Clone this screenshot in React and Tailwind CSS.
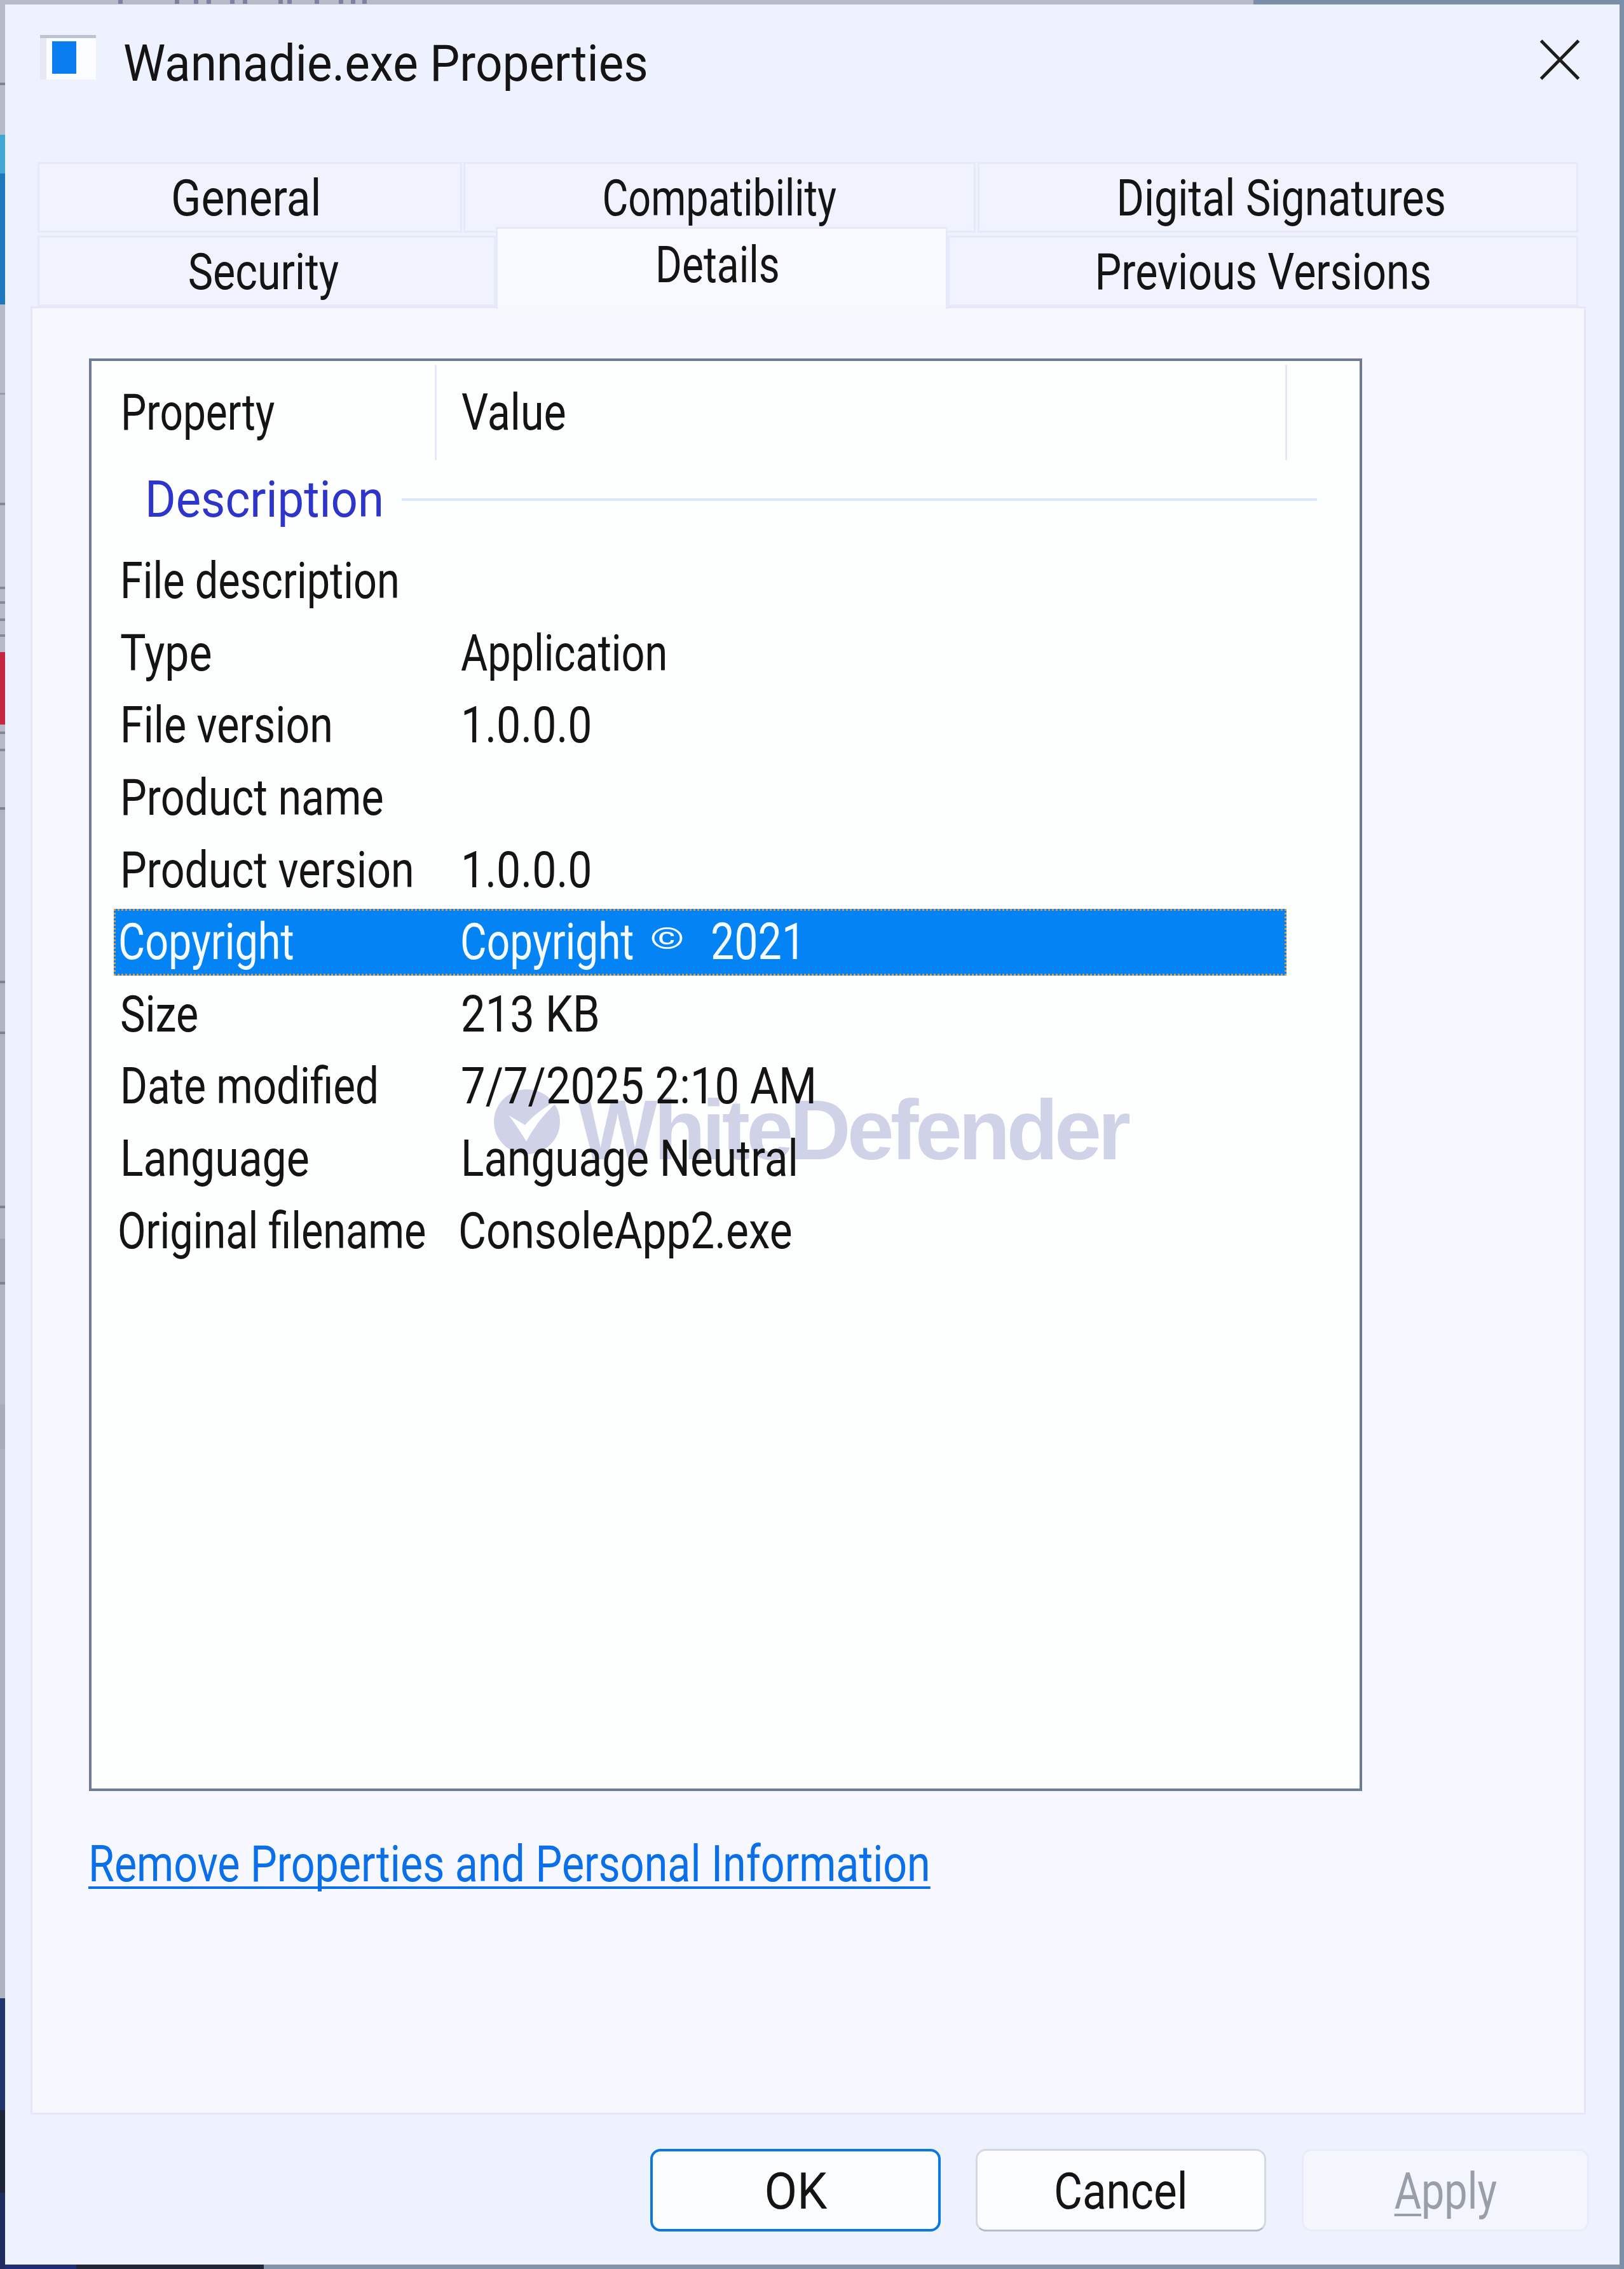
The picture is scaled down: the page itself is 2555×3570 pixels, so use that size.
const rows = [
  { name: "File description", value: "", nameClass: "scale-x-[.82]" },
  { name: "Type", value: "Application", nameClass: "scale-x-[.86]", valueClass: "scale-x-[.82]" },
  { name: "File version", value: "1.0.0.0", valueClass: "scale-x-[.86]" },
  { name: "Product name", value: "" },
  { name: "Product version", value: "1.0.0.0", valueClass: "scale-x-[.86]" },
  { name: "Copyright", value: "Copyright", selected: true },
  { name: "Size", value: "213 KB", valueClass: "scale-x-[.87]" },
  { name: "Date modified", value: "7/7/2025 2:10 AM", nameClass: "scale-x-[.83]", valueClass: "scale-x-[.87]" },
  { name: "Language", value: "Language Neutral", nameClass: "scale-x-[.86]", valueClass: "scale-x-[.855]" },
  { name: "Original filename", value: "ConsoleApp2.exe", nameClass: "-ml-[4px] scale-x-[.82]", valueClass: "-ml-[4px] scale-x-[.855]" },
];

function Label({ children, className = "scale-x-[.84]" }) {
  return <span className={`inline-block origin-left whitespace-nowrap ${className}`}>{children}</span>;
}

function CenterLabel({ children, className = "scale-x-[.84]" }) {
  return <span className={`inline-block whitespace-nowrap ${className}`}>{children}</span>;
}

function LeftStrip() {
  return (
    <div className="flex h-full w-[8px] shrink-0 flex-col bg-[#b7bbc9]">
      <div className="h-[130px]" />
      <div className="h-[4px] bg-[#7f838f]" />
      <div className="h-[78px]" />
      <div className="h-[61px] bg-[#41a5d6]" />
      <div className="h-[206px] bg-[#1f78bb]" />
      <div className="h-[139px]" />
      <div className="h-[3px] bg-[#989ca8]" />
      <div className="h-[170px]" />
      <div className="h-[4px] bg-[#858995]" />
      <div className="h-[128px]" />
      <div className="h-[4px] bg-[#858995]" />
      <div className="h-[19px]" />
      <div className="h-[4px] bg-[#858995]" />
      <div className="h-[23px]" />
      <div className="h-[4px] bg-[#858995]" />
      <div className="h-[21px]" />
      <div className="h-[4px] bg-[#858995]" />
      <div className="h-[24px]" />
      <div className="h-[114px] bg-[#c4273f]" />
      <div className="h-[11px]" />
      <div className="h-[4px] bg-[#858995]" />
      <div className="h-[23px]" />
      <div className="h-[4px] bg-[#858995]" />
      <div className="h-[88px]" />
      <div className="h-[4px] bg-[#7f838f]" />
      <div className="h-[269px] bg-[#b0b4c1]" />
      <div className="h-[4px] bg-[#7f838f]" />
      <div className="h-[76px] bg-[#b0b4c1]" />
      <div className="h-[4px] bg-[#7f838f]" />
      <div className="h-[270px] bg-[#b0b4c1]" />
      <div className="h-[4px] bg-[#7f838f]" />
      <div className="h-[48px] bg-[#b0b4c1]" />
      <div className="h-[68px] bg-[#a1a5b2]" />
      <div className="h-[4px] bg-[#7f838f]" />
      <div className="h-[190px] bg-[#b0b4c1]" />
      <div className="h-[70px] bg-[#a8acb9]" />
      <div className="h-[864px] bg-[#afb3c0]" />
      <div className="h-[176px] bg-[#21346f]" />
      <div className="h-[130px] bg-[#1d2338]" />
      <div className="h-[120px] bg-[#1e2d5e]" />
    </div>
  );
}

function TopStrip() {
  return (
    <div className="flex h-[7px] shrink-0">
      <svg className="h-[7px] w-[1964px] shrink-0" viewBox="0 0 1964 7">
        <rect width="1964" height="7" fill="#b7bbc9" />
        {[178, 267, 297, 317, 354, 374, 430, 444, 487, 525, 544, 562].map((x) => (
          <rect key={x} x={x} y="0" width="7" height="6" fill="#7f7f9e" />
        ))}
      </svg>
      <div className="flex-1 bg-[#7c8fa8]" />
    </div>
  );
}

function BottomStrip() {
  return (
    <div className="flex h-[7px] shrink-0">
      <div className="w-[112px] bg-[#1e2d75]" />
      <div className="w-[295px] bg-[#20273a]" />
      <div className="flex-1 bg-[#8594a8]" />
    </div>
  );
}

function Tab({ label, w, active, className = "", textClass }) {
  if (active) {
    return (
      <div className={`relative z-10 -mb-[4px] flex h-[129px] shrink-0 justify-center border-x-[3px] border-t-[3px] border-[#e6e9f8] bg-[#f8f9ff] pt-[18px] ${w} ${className}`}>
        <span className="pr-[14px]"><CenterLabel className={textClass}>{label}</CenterLabel></span>
      </div>
    );
  }
  return (
    <div className={`flex h-[111px] shrink-0 items-center justify-center border-[3px] border-[#e6e9f8] bg-[#f0f3fe] pt-[4px] ${w} ${className}`}>
      <CenterLabel className={textClass}>{label}</CenterLabel>
    </div>
  );
}

function Row({ name, value, selected, nameClass, valueClass }) {
  if (selected) {
    return (
      <div className="flex h-[113.6px] items-center">
        <div className="flex h-[105px] w-full items-center bg-[#0483f5] text-[#f6fbff] outline-[3px] outline-dotted -outline-offset-[3px] outline-[#d99a4e]">
          <div className="w-[545px] pl-[7px]"><span className="inline-block origin-left scale-x-[.82]">{name}</span></div>
          <div className="flex items-center">
            <span className="w-[272px] origin-left scale-x-[.81]">{value}</span>
            <span className="ml-[22px] flex w-[63px] -translate-y-[6px] scale-x-[1.5] items-center justify-center text-[46px] leading-none">©</span>
            <span className="ml-[37px] w-[140px] origin-left scale-x-[.84]">2021</span>
          </div>
        </div>
      </div>
    );
  }
  return (
    <div className="flex h-[113.6px] items-center">
      <div className="w-[546px] pl-[10px]"><Label className={nameClass}>{name}</Label></div>
      <div><Label className={valueClass}>{value}</Label></div>
    </div>
  );
}

function Watermark() {
  return (
    <div className="absolute left-[633px] top-[1146px] flex items-start">
      <svg className="h-[102px] w-[105px] shrink-0" viewBox="0 0 105 102">
        <ellipse cx="52" cy="51" rx="52" ry="51" fill="#d0d3e8" />
        <path d="M23.5 41 L49 56 Q74 28 106 15 Q72 42 51 82 Q38 60 23.5 41Z" fill="#fdffff" />
      </svg>
      <span className="-mt-[12px] ml-[27px] font-['Liberation_Sans',sans-serif] text-[133px] font-bold leading-[1.15] tracking-[-5.7px] text-[#d0d3e8]">
        WhiteDefender
      </span>
    </div>
  );
}

export default function App() {
  return (
    <div className="flex h-[3570px] w-[2555px] overflow-hidden bg-[#b7bbc9] font-['Roboto',sans-serif] text-[79px] leading-none text-[#141414]">
      <LeftStrip />
      <div className="flex w-[2540px] shrink-0 flex-col">
        <TopStrip />
        <div className="flex flex-1 flex-col bg-[#eef2fe]">
          {/* title bar */}
          <div className="flex h-[248px] shrink-0 items-start pl-[55px] pr-[62px]">
            <svg className="mt-[48px] h-[70px] w-[88px] shrink-0" viewBox="0 0 88 70">
              <rect x="0" y="0" width="88" height="5" fill="#c0c3d2" />
              <rect x="0" y="5" width="10" height="65" fill="#e6e8f4" />
              <rect x="10" y="5" width="78" height="65" fill="#fafcff" />
              <rect x="19" y="10" width="38" height="51" fill="#0a7df0" />
            </svg>
            <h1 className="ml-[43px] mt-[54px] origin-left scale-x-[.945] whitespace-nowrap font-normal">Wannadie.exe Properties</h1>
            <svg className="ml-auto mt-[55px] h-[64px] w-[64px] shrink-0" viewBox="0 0 63 64">
              <path d="M2 2 L61 62 M61 2 L2 62" stroke="#1d1d1d" strokeWidth="5" fill="none" />
            </svg>
          </div>

          {/* tabs */}
          <div className="ml-[51px] flex flex-col gap-[5px]">
            <div className="flex">
              <Tab label="General" w="w-[668px]" textClass="-translate-x-[6px] scale-x-[.88]" />
              <Tab label="Compatibility" w="w-[806px]" className="ml-[2px]" textClass="scale-x-[.795]" />
              <Tab label="Digital Signatures" w="w-[945px]" className="ml-[3px]" textClass="translate-x-[5px] scale-x-[.84]" />
            </div>
            <div className="flex h-[111px] items-end">
              <Tab label="Security" w="w-[721px]" textClass="-translate-x-[5px] scale-x-[.84]" />
              <Tab label="Details" w="w-[711px]" active textClass="scale-x-[.81]" />
              <Tab label="Previous Versions" w="w-[992px]" textClass="scale-x-[.84]" />
            </div>
          </div>

          {/* details page */}
          <div className="ml-[40px] h-[2845px] w-[2447px] shrink-0 border-[3px] border-[#e3e7f7] bg-[#f7f8ff]">
            <div className="relative ml-[89px] mt-[79px] h-[2254px] w-[2003px] border-[4px] border-[#6f7b95] bg-[#fdffff]">
              <Watermark />
              <div className="relative z-10">
                <div className="flex h-[156px] pt-[6px]">
                  <div className="flex w-[543px] items-center border-r-[3px] border-[#e5e8f6] pl-[46px]"><Label className="scale-x-[.81]">Property</Label></div>
                  <div className="flex w-[1338px] items-center border-r-[3px] border-[#e5e8f6] pl-[39px]"><Label>Value</Label></div>
                </div>
                <div className="flex h-[134px] items-center pb-[10px] pl-[84px]">
                  <span className="w-[404px] origin-left scale-x-[.94] text-[#2f35c9]">Description</span>
                  <div className="h-[4px] w-[1440px] bg-[#dbe6fb]" />
                </div>
                <div className="ml-[35px] w-[1845px]">
                  {rows.map((row) => (
                    <Row key={row.name} {...row} />
                  ))}
                </div>
              </div>
            </div>
            <a className="ml-[88px] mt-[76px] inline-block origin-left scale-x-[.84] whitespace-nowrap text-[#0a6fe8] underline decoration-[4px] underline-offset-[8px] [text-decoration-skip-ink:none]">
              Remove Properties and Personal Information
            </a>
          </div>

          {/* buttons */}
          <div className="mt-[54px] flex justify-end pr-[48px]">
            <button className="flex h-[130px] w-[457px] items-center justify-center rounded-[16px] border-[4px] border-[#0a78e0] bg-[#fbfcfe] pt-[4px]">
              <CenterLabel className="scale-x-[.95]">OK</CenterLabel>
            </button>
            <button className="ml-[55px] flex h-[130px] w-[457px] items-center justify-center rounded-[16px] border-[3px] border-[#d5d7e2] border-b-[#b9bbc6] bg-[#fbfcfe] pt-[4px]">
              <CenterLabel className="scale-x-[.875]">Cancel</CenterLabel>
            </button>
            <button className="ml-[56px] flex h-[130px] w-[452px] items-center justify-center rounded-[16px] border-[3px] border-[#e9ecf9] bg-[#f4f6fd] pt-[4px] text-[#9a9ea8]">
              <CenterLabel className="scale-x-[.82]"><span className="underline decoration-[4px] underline-offset-[8px]">A</span>pply</CenterLabel>
            </button>
          </div>
        </div>
        <BottomStrip />
      </div>
      <div className="w-[7px] shrink-0 bg-[#7c8fa8]" />
    </div>
  );
}
